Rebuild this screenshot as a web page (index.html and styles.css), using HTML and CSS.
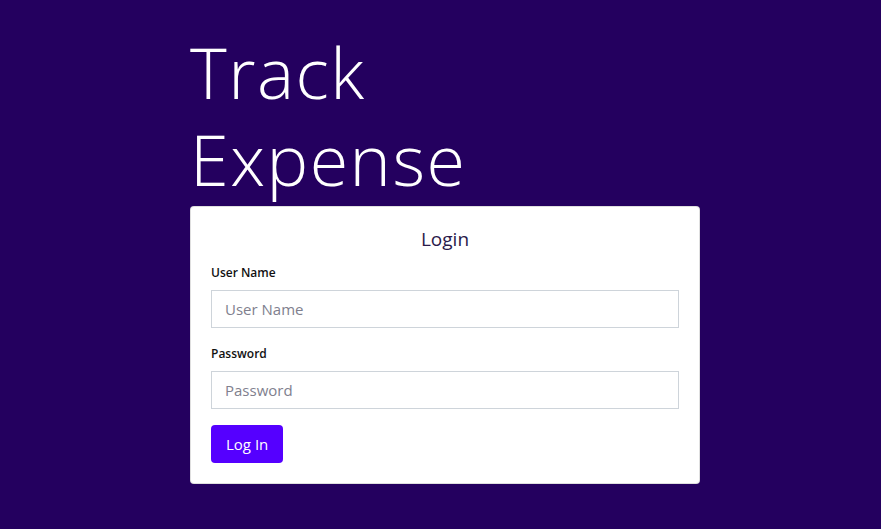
FILE: index.html
```html
<!DOCTYPE html>
<html lang="en">
<head>
<meta charset="utf-8">
<title>Track Expense</title>
<link rel="stylesheet" href="styles.css">
</head>
<body>
<main class="page">
  <h1 class="brand">Track<br>Expense</h1>
  <section class="card">
    <h5 class="card-title">Login</h5>
    <form class="form">
      <div class="field">
        <label class="label" for="user">User Name</label>
        <input class="input" id="user" type="text" placeholder="User Name">
      </div>
      <div class="field">
        <label class="label" for="pass">Password</label>
        <input class="input" id="pass" type="password" placeholder="Password">
      </div>
      <button class="btn" type="button">Log In</button>
    </form>
  </section>
</main>
</body>
</html>
```
FILE: styles.css
```css
html, body {
  margin: 0;
  padding: 0;
  height: 100%;
}
body {
  background: #24005f;
  font-family: "Open Sans", "Lato", sans-serif;
  color: #212529;
}
.page {
  width: 510px;
  margin: 0 0 0 190px;
  padding-top: 29px;
}
.brand {
  margin: 0 0 3px 0;
  font-family: "Open Sans", sans-serif;
  font-size: 70px;
  line-height: 87px;
  font-weight: 300;
  color: #ffffff;
  letter-spacing: 1.5px;
}
.card {
  background: #ffffff;
  border: 1px solid rgba(0,0,0,0.125);
  border-radius: 4px;
  padding: 20px;
}
.card-title {
  margin: 0 0 12px 0;
  text-align: center;
  font-size: 19px;
  line-height: 24px;
  font-weight: 400;
  color: #2a1a4a;
}
.field {
  display: flex;
  flex-direction: column;
  margin-bottom: 16px;
}
.label {
  font-size: 12px;
  line-height: 19px;
  font-weight: 600;
  color: #111;
  margin-bottom: 8px;
}
.input {
  box-sizing: border-box;
  height: 38px;
  width: 100%;
  border: 1px solid #ced4da;
  border-radius: 0;
  padding: 6px 13px;
  font-family: inherit;
  font-size: 15px;
  color: #495057;
  outline: none;
}
.input::placeholder {
  color: #80808e;
}
.btn {
  height: 38px;
  padding: 0 15px;
  border: none;
  border-radius: 4px;
  background: #5500ff;
  color: #ffffff;
  font-family: inherit;
  font-size: 15px;
}
```
